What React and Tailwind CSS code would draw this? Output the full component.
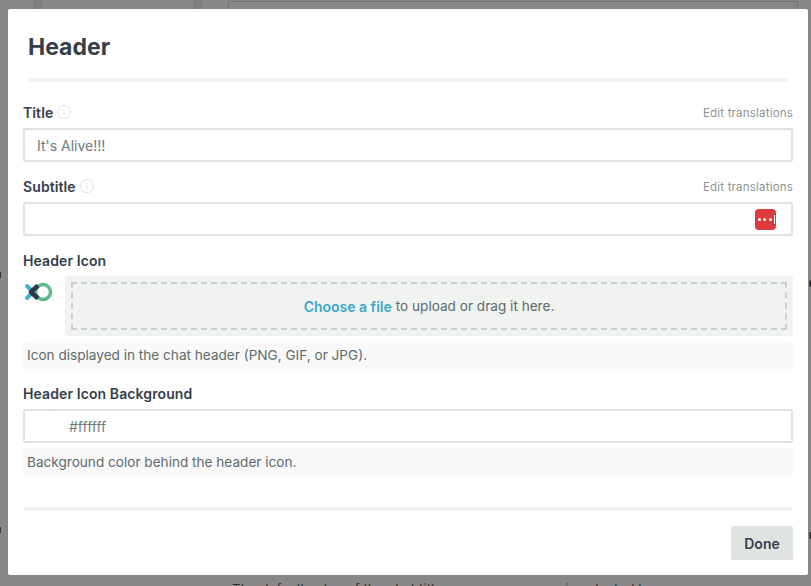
import React from "react";
import { Info } from "lucide-react";

const Logo = () => (
    <svg width="30" height="20" viewBox="0 0 30 20" fill="none">
        <circle cx="20" cy="10" r="7.5" stroke="#5dbb8a" strokeWidth="3.5" />
        <path d="M4 4 L9 9 M9 11 L4 16" stroke="#3fb0cf" strokeWidth="4" strokeLinecap="round" />
        <path d="M15 3.5 L8 10 L15 16.5" stroke="#2d3748" strokeWidth="4.5" strokeLinejoin="round" />
    </svg>
);

const FieldLabel = ({ text, info, link }) => (
    <div className="flex items-center h-[20px]">
        <span className="text-[14px] font-semibold tracking-[0.1px] text-[#353e4b]">{text}</span>
        {info && <Info size={16} strokeWidth={1.5} className="ml-[3px] text-[#dfe4e2]" />}
        {link && <span className="ml-auto text-[11.5px] tracking-[0.2px] text-[#8d9493] mt-[4px]">Edit translations</span>}
    </div>
);

const Hint = ({ children }) => (
    <div className="mt-[5px] h-[28px] rounded-[3px] bg-[#f8f9f8] px-[4px] flex items-center text-[13.6px] text-[#5d6b6b]">
        {children}
    </div>
);

const App = () => {
    return (
        <div className="relative h-[586px] w-[811px] overflow-hidden bg-[#888888] font-['Inter',sans-serif]">
            {/* dimmed page behind the modal */}
            <div className="absolute left-[33px] top-0 h-[9px] w-[10px] bg-[#7f7f7f]"></div>
            <div className="absolute left-[193px] top-0 h-[9px] w-[10px] bg-[#7f7f7f]"></div>
            <div className="absolute left-[228px] top-[1px] h-[8px] w-[570px] rounded-t-[2px] border-l border-t border-r border-[#6f6f6f]"></div>
            <div className="absolute left-0 top-[272px] h-[6px] w-[1px] bg-[#33363c]"></div>
            <div className="absolute left-0 top-[527px] h-[6px] w-[1px] bg-[#33363c]"></div>
            <div className="absolute left-[809px] top-[280px] h-[7px] w-[2px] rounded-l-full bg-[#33363c]"></div>
            <div className="absolute left-[809px] top-[532px] h-[7px] w-[2px] rounded-l-full bg-[#33363c]"></div>
            <div className="absolute left-[232px] top-[581px] text-[13.5px] leading-[17px] text-[#333333] whitespace-nowrap">
                The default value of the chat title <span className="ml-[120px]">is selected by</span>
            </div>

            <div className="absolute left-[8px] top-[9px] h-[566px] w-[800px] rounded-[2px] bg-white px-[15px]">
                <div className="mx-[5px] h-[73px] border-b-[4px] border-[#f2f4f2] pt-[22px]">
                    <h1 className="text-[23px] leading-[32px] font-bold text-[#353e4b]">Header</h1>
                </div>

                <div className="mt-[20px]">
                    <FieldLabel text="Title" info link />
                    <div className="mt-[6px] flex h-[34px] items-center rounded-[2px] border-2 border-[#dfe4e2] px-[12px] text-[14px] text-[#6f7c7c]">
                        It's Alive!!!
                    </div>
                </div>

                <div className="mt-[14px]">
                    <FieldLabel text="Subtitle" info link />
                    <div className="mt-[6px] flex h-[34px] items-center justify-end rounded-[2px] border-2 border-[#dfe4e2] pr-[15px]">
                        <div className="flex h-[21px] w-[21px] items-center gap-[2.5px] rounded-[4px] bg-[#dd3b3b] pl-[2.5px]">
                            <span className="h-[3px] w-[3px] rounded-full bg-white"></span>
                            <span className="h-[3px] w-[3px] rounded-full bg-white"></span>
                            <span className="h-[3px] w-[3px] rounded-full bg-white"></span>
                            <span className="h-[9px] w-[1px] bg-white"></span>
                        </div>
                    </div>
                </div>

                <div className="mt-[14px]">
                    <FieldLabel text="Header Icon" />
                    <div className="mt-[6px] flex">
                        <div className="w-[42px] pt-[6px]"><Logo /></div>
                        <div className="h-[60px] flex-1 rounded-[2px] bg-[#f1f3f1] p-[6px]">
                            <div className="flex h-full items-center justify-center border-2 border-dashed border-[#c9d0cc] text-[13.6px] text-[#5d6b6b]">
                                <span className="text-[14px] font-semibold text-[#3aa9c9]">Choose a file</span>
                                <span className="ml-[4px]">to upload or drag it here.</span>
                            </div>
                        </div>
                    </div>
                    <Hint>Icon displayed in the chat header (PNG, GIF, or JPG).</Hint>
                </div>

                <div className="mt-[14px]">
                    <FieldLabel text="Header Icon Background" />
                    <div className="relative mt-[6px] flex h-[34px] items-center rounded-[2px] border-2 border-[#dfe4e2] pl-[44px] text-[14px] text-[#6f7c7c]">
                        {/* white swatch, only its corners show */}
                        <span className="absolute left-[26px] top-[2px] h-[1px] w-[1px] bg-[#e4e4e4]"></span>
                        <span className="absolute left-[2px] bottom-[2px] h-[1px] w-[1px] bg-[#e4e4e4]"></span>
                        <span className="absolute left-[26px] bottom-[2px] h-[1px] w-[1px] bg-[#e4e4e4]"></span>
                        #ffffff
                    </div>
                    <Hint>Background color behind the header icon.</Hint>
                </div>

                <div className="mt-[31px] h-[4px] rounded-[2px] bg-[#f2f4f2]"></div>

                <div className="mt-[15px] flex justify-end">
                    <button className="h-[34px] w-[62px] rounded-[2px] bg-[#dfe4e2] text-[14px] font-semibold text-[#353e4b]">
                        Done
                    </button>
                </div>
            </div>
        </div>
    );
};

export default App;
